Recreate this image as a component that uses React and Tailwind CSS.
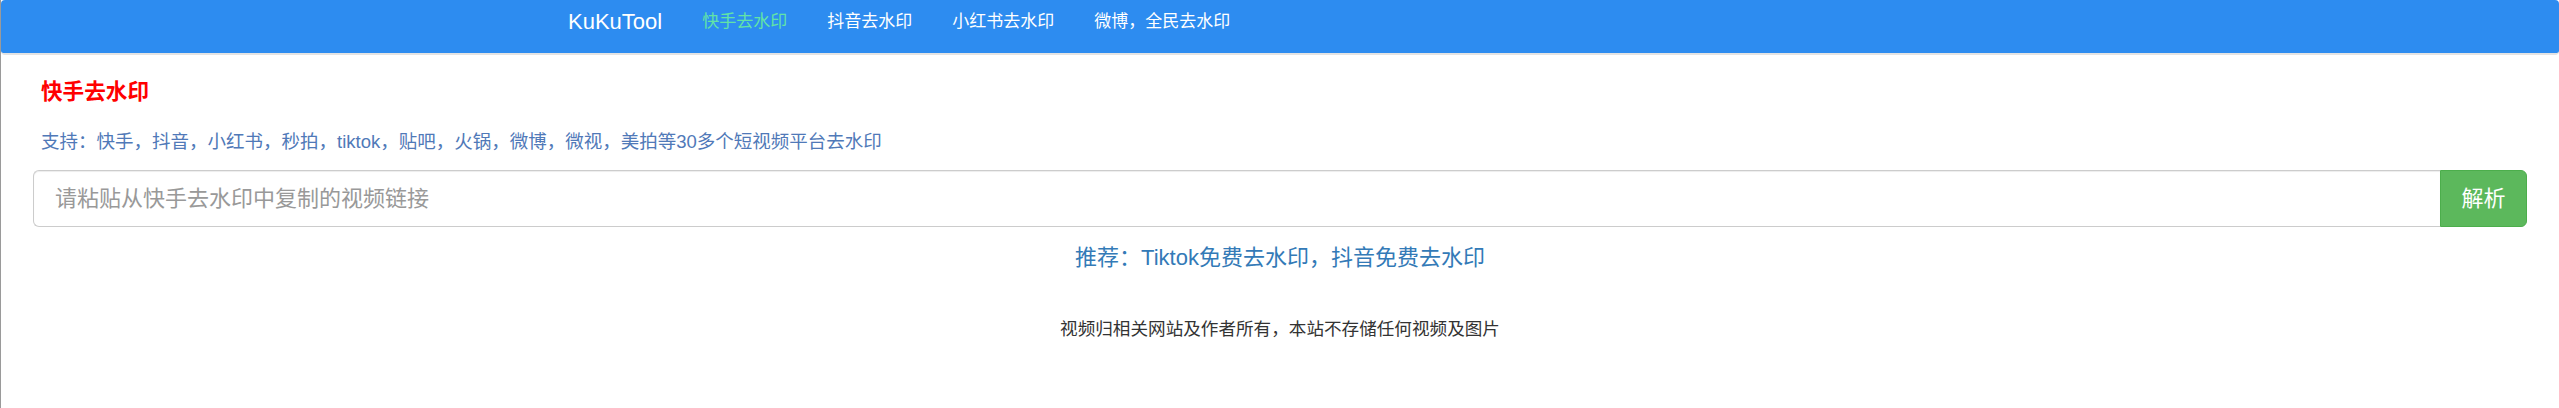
export default function App() {
  const font = { fontFamily: '"Liberation Sans", "Noto Sans CJK SC", sans-serif' };
  const links = ["抖音去水印", "小红书去水印", "微博，全民去水印"];
  return (
    <div className="min-h-[408px] w-full bg-white border-l border-[#9a9a9a]" style={font}>
      <nav className="h-[55px] w-full rounded-[4px] bg-[#2d8cf0] border-b-2 border-[#e3e3e3]">
        <div className="flex h-[43px] items-center pl-[567px]">
          <span className="text-[22px] leading-none text-white">KuKuTool</span>
          <span className="ml-[40px] text-[17px] leading-none text-[#62e3a6]">快手去水印</span>
          {links.map((l) => (
            <span key={l} className="ml-[40px] text-[17px] leading-none text-white">
              {l}
            </span>
          ))}
        </div>
      </nav>
      <main className="px-[32px]">
        <h4 className="mt-[22px] pl-[8px] text-[21.6px] font-bold leading-[30px] text-[#ff0000]">快手去水印</h4>
        <p className="mt-[22px] pl-[8px] text-[18.5px] leading-[26px] text-[#5079b8]">
          支持：快手，抖音，小红书，秒拍，tiktok，贴吧，火锅，微博，微视，美拍等30多个短视频平台去水印
        </p>
        <div className="mt-[15px] flex h-[57px]">
          <input
            className="h-full flex-1 rounded-l-[6px] border border-r-0 border-[#cccccc] px-[21px] text-[22px] text-[#555] placeholder:text-[#999] outline-none shadow-[inset_0_1px_1px_rgba(0,0,0,0.075)]"
            placeholder="请粘贴从快手去水印中复制的视频链接"
            style={font}
          />
          <button
            className="h-full w-[87px] rounded-r-[6px] border border-[#4cae4c] bg-[#5cb85c] text-[22px] text-white"
            style={font}
          >
            解析
          </button>
        </div>
        <p className="mt-[16px] text-center text-[22px] leading-[30px] text-[#337ab7]">
          推荐：Tiktok免费去水印，抖音免费去水印
        </p>
        <p className="mt-[44px] text-center text-[17.6px] leading-[24px] text-[#333]">
          视频归相关网站及作者所有，本站不存储任何视频及图片
        </p>
      </main>
    </div>
  );
}
